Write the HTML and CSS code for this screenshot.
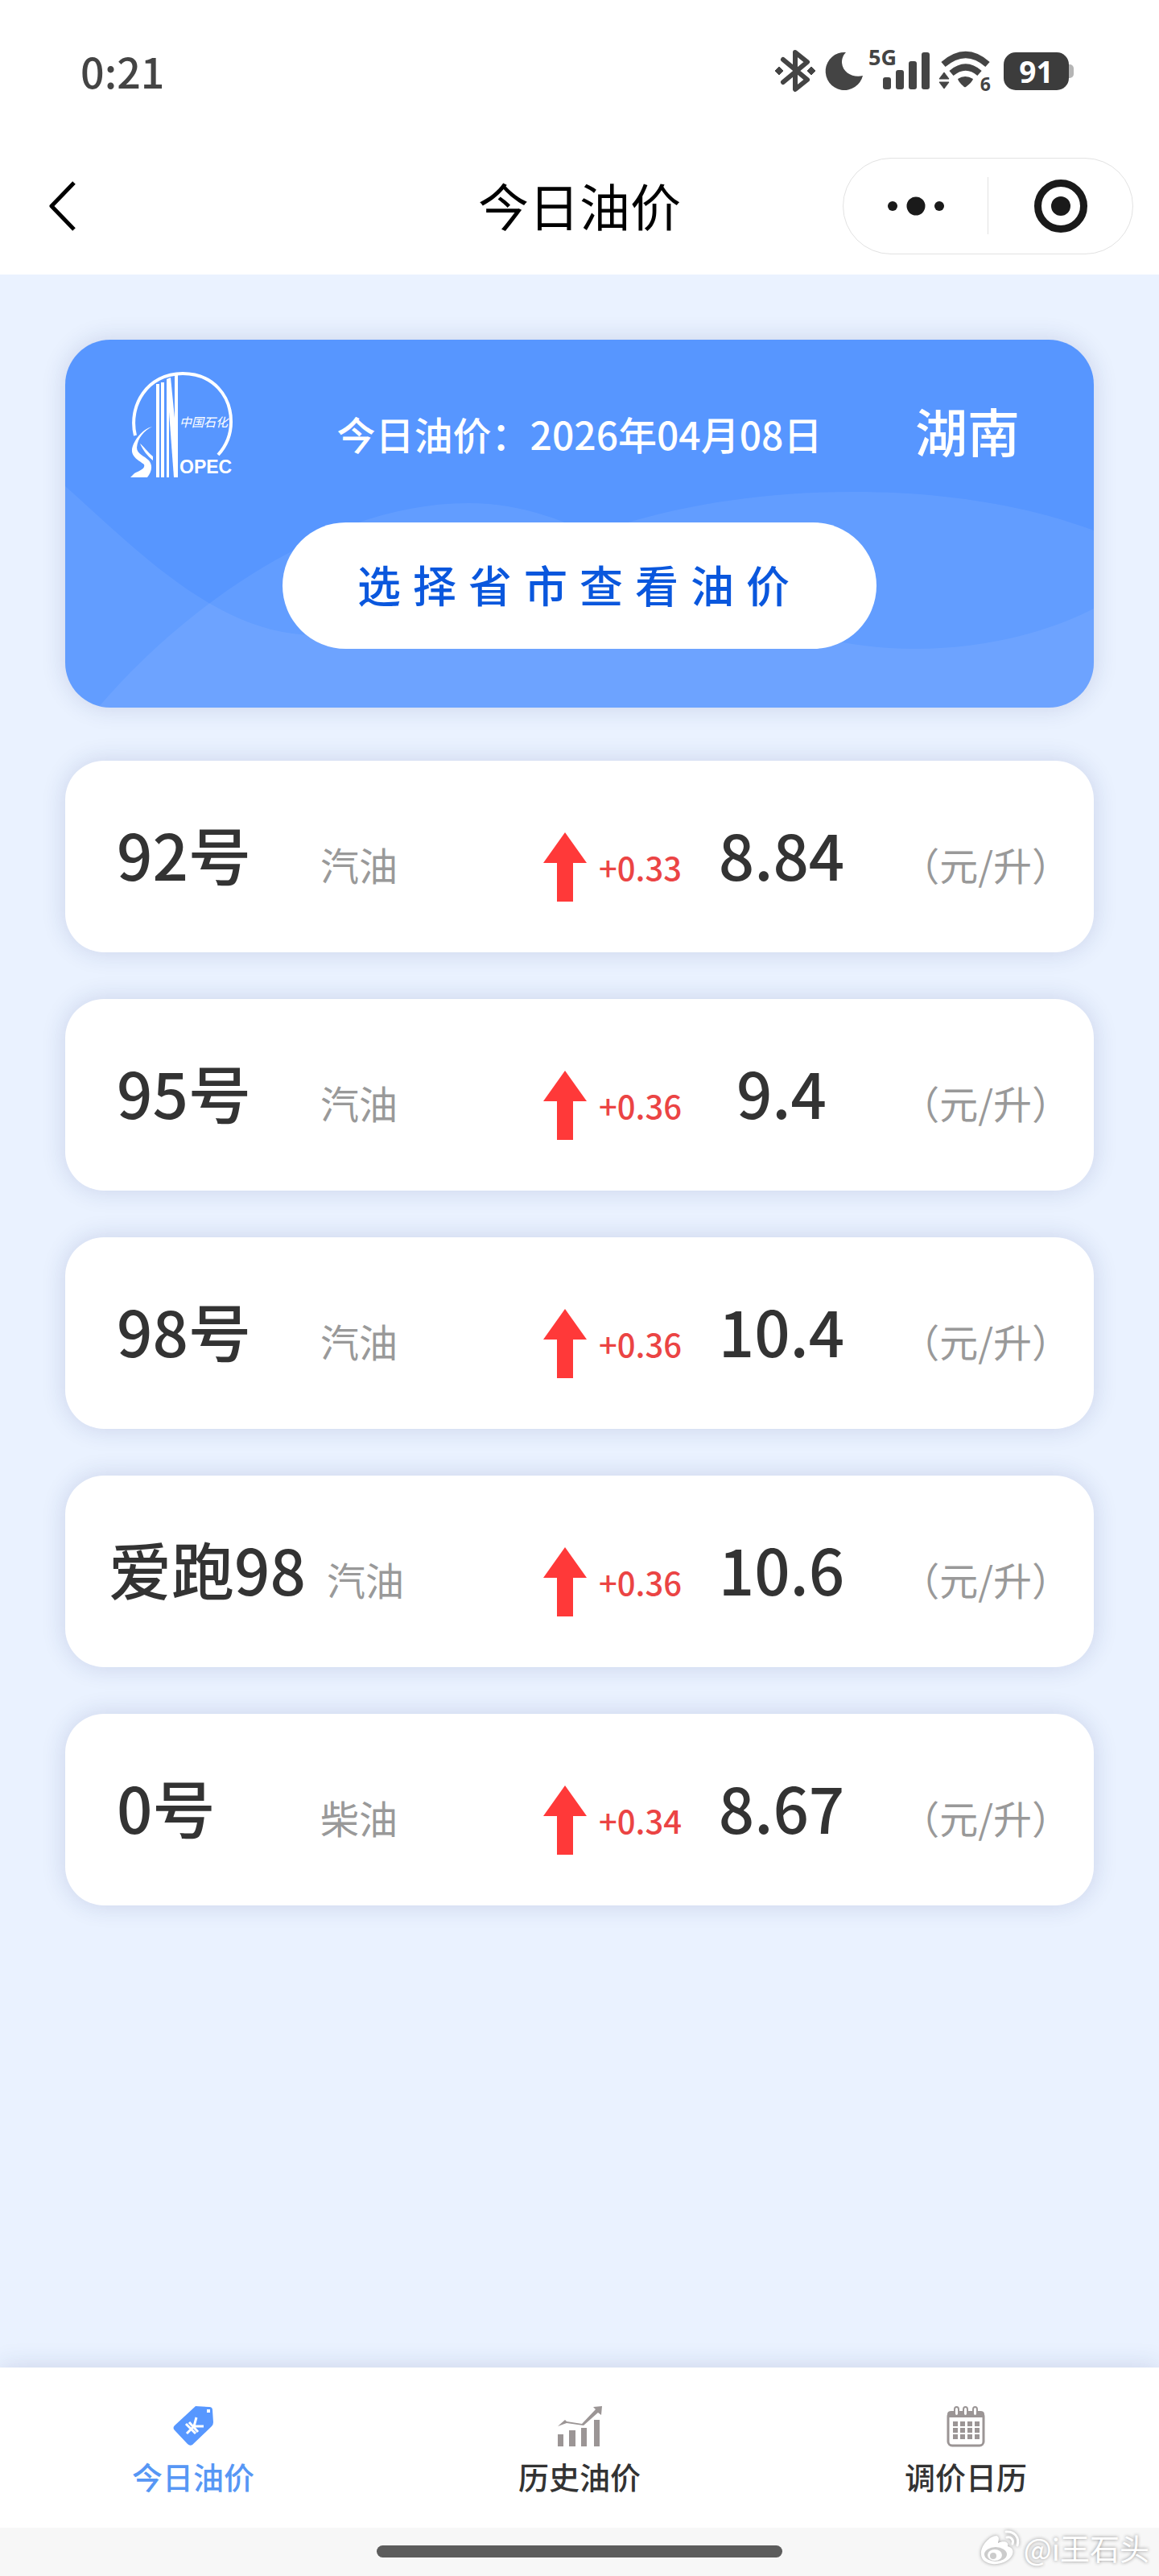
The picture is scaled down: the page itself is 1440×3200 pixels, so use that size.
FILE: index.html
```html
<!DOCTYPE html>
<html lang="zh-CN">
<head>
    <meta charset="UTF-8">
    <meta name="viewport" content="width=device-width, initial-scale=1.0">
    <title>今日油价</title>
    <link rel="stylesheet" href="styles.css">
</head>
<body>
    <header class="header">
        <div class="status-bar">
            <span class="time">0:21</span>
            <div class="status-icons">
                <svg class="icon-bluetooth" width="50" height="54" viewBox="0 0 50 54">
                    <path d="M10 13 L40 38 L25 50 V4 L40 16 L10 41" fill="none" stroke="#444" stroke-width="6" stroke-linecap="round" stroke-linejoin="round"/>
                    <path d="M5 22 l5 5 -5 5 -5 -5z M45 22 l5 5 -5 5 -5 -5z" fill="#444" stroke="#444" stroke-width="1" stroke-linejoin="round"/>
                </svg>
                <svg class="icon-moon" width="48" height="48" viewBox="0 0 48 48">
                    <path d="M25 1 A23.500 23.500 0 1 0 47 30 C36 33 22 27 21 14 C21 8 23 4 26 1z" fill="#444"/>
                </svg>
                <div class="signal">
                    <span class="network">5G</span>
                    <svg width="58" height="46" viewBox="0 0 58 46" fill="#444">
                        <rect x="0" y="31" width="10" height="15" rx="3"/>
                        <rect x="16" y="22" width="10" height="24" rx="3"/>
                        <rect x="32" y="11" width="10" height="35" rx="3"/>
                        <rect x="48" y="0" width="10" height="46" rx="3"/>
                    </svg>
                </div>
                <div class="wifi">
                    <svg width="64" height="48" viewBox="0 0 64 48" fill="#444">
                        <path d="M5 16 Q33 -8 60 16" fill="none" stroke="#444" stroke-width="8"/>
                        <path d="M15 27 Q33 12 50 27" fill="none" stroke="#444" stroke-width="8"/>
                        <path d="M23 34 Q32 28 42 34 Q41 38 33 44 Q31 45 30 43 Q24 38 23 34z"/>
                        <path d="M6 26 l6 8 h-12z M6 46 l6 -8 h-12z" stroke="#444" stroke-linejoin="round"/>
                    </svg>
                    <span class="wifi-gen">6</span>
                </div>
                <div class="battery"><span>91</span></div>
            </div>
        </div>
        <nav class="nav-bar">
            <button class="back-btn" aria-label="返回">
                <svg width="36" height="64" viewBox="0 0 36 64">
                    <path d="M32 3 L4 32 L32 61" fill="none" stroke="#000" stroke-width="5" stroke-linejoin="round"/>
                </svg>
            </button>
            <h1>今日油价</h1>
            <div class="capsule">
                <button aria-label="更多">
                    <svg width="72" height="24" viewBox="0 0 72 24" fill="#1a1a1a">
                        <circle cx="7" cy="12" r="6"/>
                        <circle cx="36" cy="12" r="11.500"/>
                        <circle cx="65" cy="12" r="6"/>
                    </svg>
                </button>
                <button aria-label="关闭">
                    <svg width="66" height="66" viewBox="0 0 66 66">
                        <circle cx="33" cy="33" r="28.500" fill="none" stroke="#1a1a1a" stroke-width="9"/>
                        <circle cx="33" cy="33" r="12" fill="#1a1a1a"/>
                    </svg>
                </button>
            </div>
        </nav>
    </header>

    <main class="content">
        <section class="banner">
            <svg class="waves" viewBox="0 0 1278 457" preserveAspectRatio="none" fill="#fff">
                <path fill-opacity="0.07" d="M0 182 C90 262 190 367 310 367 C470 367 600 189 980 189 C1100 189 1200 208 1278 237 V457 H0z"/>
                <path fill-opacity="0.07" d="M41 457 C140 340 320 203 501 203 C690 203 800 384 1056 384 C1140 384 1220 364 1278 334 V457z"/>
            </svg>
            <div class="banner-top">
                <svg class="logo" width="130" height="133" viewBox="0 0 130 133" role="img" aria-label="中国石化 SINOPEC">
                    <path d="M7 81 C-2 44 22 4 66 4 C104 4 126 32 126 64 C126 82 120 94 110 105" fill="none" stroke="#fff" stroke-width="4"/>
                    <path d="M28 70 C16 73 5 87 3 98 C2 108 12 112 18 117 C20 122 12 125 6 128 L1 133 H22 C29 124 28 117 24 112 C18 106 9 104 9 96 C10 84 18 75 28 70z" fill="#fff"/>
                    <path d="M13 91 C17 100 22 106 29 112 V107 C22 101 17 94 13 91z" fill="#fff"/>
                    <path d="M33 17 H37 V133 H33z M39 15 H43 V133 H39z M46 11 H49 V133 H46z M56 6 H60 V133 H56z" fill="#fff"/>
                    <path d="M46 11 L51 9 L60 100 V133 H55z" fill="#fff"/>
                    <text class="logo-name" x="62" y="70">中国石化</text>
                    <text class="logo-latin" x="62" y="128">OPEC</text>
                </svg>
                <p class="date">今日油价：2026年04月08日</p>
                <p class="province">湖南</p>
            </div>
            <button class="select-btn">选择省市查看油价</button>
        </section>

        <ul class="fuel-list">
            <li class="fuel">
                <span class="name">92号</span>
                <span class="type">汽油</span>
                <span class="change"><svg class="arrow" width="54" height="86" viewBox="0 0 54 86"><path d="M27 0 L54 38 H37 V86 H17 V38 H0z" fill="#ff3939"/></svg>+0.33</span>
                <span class="price">8.84</span>
                <span class="unit">（元/升）</span>
            </li>
            <li class="fuel">
                <span class="name">95号</span>
                <span class="type">汽油</span>
                <span class="change"><svg class="arrow" width="54" height="86" viewBox="0 0 54 86"><path d="M27 0 L54 38 H37 V86 H17 V38 H0z" fill="#ff3939"/></svg>+0.36</span>
                <span class="price">9.4</span>
                <span class="unit">（元/升）</span>
            </li>
            <li class="fuel">
                <span class="name">98号</span>
                <span class="type">汽油</span>
                <span class="change"><svg class="arrow" width="54" height="86" viewBox="0 0 54 86"><path d="M27 0 L54 38 H37 V86 H17 V38 H0z" fill="#ff3939"/></svg>+0.36</span>
                <span class="price">10.4</span>
                <span class="unit">（元/升）</span>
            </li>
            <li class="fuel long-name">
                <span class="name">爱跑98</span>
                <span class="type">汽油</span>
                <span class="change"><svg class="arrow" width="54" height="86" viewBox="0 0 54 86"><path d="M27 0 L54 38 H37 V86 H17 V38 H0z" fill="#ff3939"/></svg>+0.36</span>
                <span class="price">10.6</span>
                <span class="unit">（元/升）</span>
            </li>
            <li class="fuel">
                <span class="name">0号</span>
                <span class="type">柴油</span>
                <span class="change"><svg class="arrow" width="54" height="86" viewBox="0 0 54 86"><path d="M27 0 L54 38 H37 V86 H17 V38 H0z" fill="#ff3939"/></svg>+0.34</span>
                <span class="price">8.67</span>
                <span class="unit">（元/升）</span>
            </li>
        </ul>
    </main>

    <nav class="tab-bar">
        <a class="tab active" href="#today">
            <svg width="50" height="50" viewBox="0 0 50 50">
                <path d="M28 0 L45 1 Q49 1 49 5 L50 20 Q50 23 48 25 L24 48 Q21 50 18 47 L2 30 Q-1 27 2 24z" fill="#5797ff"/>
                <rect x="42" y="4" width="4" height="4" fill="#fff"/>
                <path d="M29 14 L26 25 L38 25 M26 25 L17 34 M16 22 L28 34 M20 20 L31 32" fill="none" stroke="#fff" stroke-width="3"/>
            </svg>
            <span>今日油价</span>
        </a>
        <a class="tab" href="#history">
            <svg width="56" height="50" viewBox="0 0 56 50" fill="#9b9595">
                <path d="M1 35 h7 v15 h-7z M15 30 h8 v20 h-8z M30 27 h7 v23 h-7z M46 17 h7 v33 h-7z"/>
                <path d="M1 25 L10 17 L12 19 L31 22 L48 4 L45 1 L56 0 L55 11 L51 8 L33 24 L12 21z"/>
            </svg>
            <span>历史油价</span>
        </a>
        <a class="tab" href="#calendar">
            <svg width="46" height="50" viewBox="0 0 46 50">
                <rect x="1" y="8" width="44" height="41" rx="5" fill="none" stroke="#9b9595" stroke-width="3"/>
                <path d="M0 14 V10 Q0 6 5 6 H41 Q46 6 46 10 V14z" fill="#9b9595"/>
                <g fill="#fff" stroke="#9b9595" stroke-width="2">
                    <rect x="9" y="1" width="5" height="11" rx="3"/>
                    <rect x="20" y="1" width="5" height="11" rx="3"/>
                    <rect x="32" y="1" width="5" height="11" rx="3"/>
                </g>
                <path d="M7 22 H40 M7 30 H40 M7 38 H40" fill="none" stroke="#9b9595" stroke-width="6" stroke-dasharray="6 3"/>
            </svg>
            <span>调价日历</span>
        </a>
    </nav>

    <footer class="gesture-bar">
        <div class="gesture-pill"></div>
        <div class="watermark">
            <svg width="54" height="46" viewBox="0 0 54 46">
                <path d="M3 31 C2 20 14 8 22 8 C27 9 24 16 24 17 C30 14 38 15 36 21 C43 23 44 28 41 33 C36 41 25 44 17 43 C8 42 3 37 3 31z" fill="#fff"/>
                <ellipse cx="21" cy="31" rx="14" ry="9" fill="#ccc"/>
                <ellipse cx="20" cy="32" rx="9" ry="7" fill="#fff"/>
                <circle cx="18" cy="33" r="4" fill="#ccc"/>
                <path d="M34 3 C44 2 51 10 48 20 M35 10 C40 9 44 13 42 18" fill="none" stroke="#fff" stroke-width="3" stroke-linecap="round"/>
            </svg>
            <span>@i王石头</span>
        </div>
    </footer>
</body>
</html>
```
FILE: styles.css
```css
* {
    margin: 0;
    padding: 0;
    box-sizing: border-box;
}

body {
    font-family: "Noto Sans CJK SC", sans-serif;
    background: #eaf2ff;
    color: #333;
    min-height: 100vh;
    display: flex;
    flex-direction: column;
}

button {
    font-family: inherit;
    background: none;
    border: none;
    cursor: pointer;
}

svg {
    display: block;
    flex-shrink: 0;
    overflow: visible;
}

/* header */
.header {
    background: #fff;
    padding-bottom: 6px;
}

.status-bar {
    height: 176px;
    padding: 0 112px 0 100px;
    display: flex;
    align-items: center;
    justify-content: space-between;
}

.time {
    font-size: 52px;
    font-weight: 500;
    line-height: 72px;
    color: #444;
}

.status-icons {
    display: flex;
    align-items: center;
    gap: 12px;
    color: #444;
}

.signal {
    position: relative;
    padding-left: 12px;
}

.network {
    position: absolute;
    left: -6px;
    top: -6px;
    font-family: "Open Sans", sans-serif;
    font-size: 27px;
    line-height: 24px;
    font-weight: 700;
}

.wifi {
    position: relative;
}

.wifi-gen {
    position: absolute;
    right: 0;
    bottom: -3px;
    font-family: "Open Sans", sans-serif;
    font-size: 23px;
    line-height: 22px;
    font-weight: 700;
}

.battery {
    position: relative;
    width: 81px;
    height: 47px;
    margin-left: 4px;
    border-radius: 15px;
    background: #3c3c3c;
    color: #fff;
    font-family: "Open Sans", sans-serif;
    font-size: 37px;
    line-height: 47px;
    font-weight: 700;
    text-align: center;
}

.battery::after {
    content: "";
    position: absolute;
    right: -6px;
    top: 15px;
    width: 6px;
    height: 17px;
    border-radius: 0 5px 5px 0;
    background: #b5b5b5;
}

.nav-bar {
    height: 159px;
    padding: 0 32px;
    display: grid;
    grid-template-columns: 1fr auto 1fr;
    align-items: center;
}

.back-btn {
    justify-self: start;
    padding-left: 28px;
}

.nav-bar h1 {
    font-size: 63px;
    font-weight: 400;
    line-height: 90px;
    padding-bottom: 4px;
    color: #000;
}

.capsule {
    justify-self: end;
    display: flex;
    width: 361px;
    height: 120px;
    border: 1px solid #e2e2e2;
    border-radius: 60px;
    align-items: center;
}

.capsule button {
    flex: 1;
    height: 71px;
    display: flex;
    align-items: center;
    justify-content: center;
}

.capsule button + button {
    border-left: 1px solid #e2e2e2;
}

/* content */
.content {
    flex: 1;
    padding: 81px 81px 0;
}

.banner {
    position: relative;
    overflow: hidden;
    border-radius: 56px;
    background: #5796ff;
    box-shadow: 0 0 30px rgba(30, 50, 120, 0.16);
    padding: 38px 80px 73px;
    display: flex;
    flex-direction: column;
    align-items: center;
    gap: 58px;
    color: #fff;
}

.waves {
    position: absolute;
    left: 0;
    top: 0;
    width: 100%;
    height: 100%;
}

.banner-top {
    position: relative;
    width: 100%;
    height: 131px;
    display: grid;
    grid-template-columns: 1fr auto 1fr;
    align-items: end;
}

.logo-name {
    font-size: 15px;
    font-style: italic;
    fill: #fff;
}

.logo-latin {
    font-family: "Liberation Sans", sans-serif;
    font-size: 23px;
    font-weight: 700;
    fill: #fff;
}

.date {
    font-size: 48px;
    font-weight: 500;
    line-height: 110px;
}

.province {
    font-size: 65px;
    font-weight: 500;
    line-height: 118px;
    text-align: right;
    padding-right: 12px;
}

.select-btn {
    position: relative;
    height: 157px;
    padding: 0 93px 4px;
    border-radius: 79px;
    background: #fff;
    color: #0a57dd;
    font-size: 54px;
    font-weight: 500;
    letter-spacing: 15px;
}

.fuel-list {
    list-style: none;
    margin-top: 66px;
    display: flex;
    flex-direction: column;
    gap: 58px;
}

.fuel {
    height: 238px;
    padding: 0 29px 4px 64px;
    border-radius: 48px;
    background: #fff;
    box-shadow: 0 0 30px rgba(30, 50, 120, 0.16);
    display: grid;
    grid-template-columns: 253fr 201fr 248fr 248fr 235fr;
    align-items: baseline;
    align-content: center;
    white-space: nowrap;
}

.fuel.long-name {
    padding-left: 54px;
    grid-template-columns: 271fr 193fr 248fr 248fr 235fr;
}

.name,
.price {
    font-size: 78px;
    font-weight: 500;
    line-height: 110px;
}

.price {
    text-align: center;
}

.type,
.unit {
    font-size: 48px;
    color: #999;
}

.unit {
    text-align: right;
}

.change {
    font-size: 40px;
    font-weight: 500;
    line-height: 58px;
    color: #eb4444;
    text-align: right;
}

.arrow {
    display: inline-block;
    vertical-align: -26px;
    margin-right: 15px;
}

/* bottom tabs */
.tab-bar {
    background: #fff;
    box-shadow: 0 0 30px rgba(30, 50, 120, 0.16);
    height: 199px;
    display: flex;
}

.tab {
    flex: 1;
    padding-top: 48px;
    display: flex;
    flex-direction: column;
    align-items: center;
    gap: 10px;
    color: #333;
    font-size: 38px;
    font-weight: 500;
    line-height: 54px;
    text-decoration: none;
}

.tab.active {
    color: #5797f5;
}

.gesture-bar {
    position: relative;
    height: 60px;
    padding-top: 22px;
    background: #f7f7f7;
}

.gesture-pill {
    width: 35%;
    height: 15px;
    margin: 0 auto;
    border-radius: 8px;
    background: #5c5c5c;
}

.watermark {
    position: absolute;
    right: 12px;
    top: 0;
    display: flex;
    align-items: center;
    gap: 2px;
    color: #fff;
    font-size: 37px;
    line-height: 50px;
    text-shadow: 0 0 4px #888;
}

.watermark svg {
    filter: drop-shadow(0 0 2px #999);
}
```
